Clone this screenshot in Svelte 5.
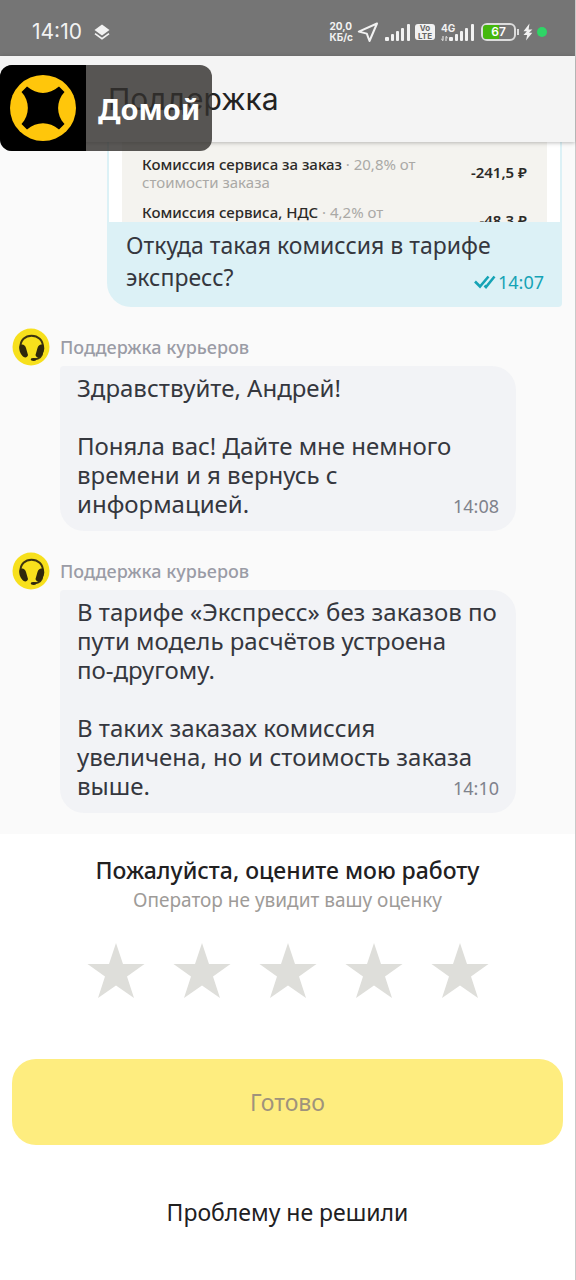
<script lang="ts">
  type Message = { id: number; text: string; time: string };

  const author = 'Поддержка курьеров';

  const charges = [
    { name: 'Комиссия сервиса за заказ', rate: '20,8% от', base: 'стоимости заказа', amount: '-241,5 ₽' },
    { name: 'Комиссия сервиса, НДС', rate: '4,2% от', base: '', amount: '-48,3 ₽' },
  ];

  const messages: Message[] = [
    {
      id: 1,
      text: 'Здравствуйте, Андрей!\n\nПоняла вас! Дайте мне немного\nвремени и я вернусь с\nинформацией.',
      time: '14:08',
    },
    {
      id: 2,
      text: 'В тарифе «Экспресс» без заказов по\nпути модель расчётов устроена\nпо-другому.\n\nВ таких заказах комиссия\nувеличена, но и стоимость заказа\nвыше.',
      time: '14:10',
    },
  ];

  let rating = $state(0);
</script>

{#snippet signal()}
  <svg class="signal" width="26" height="17" viewBox="0 0 26 17" fill="currentColor" aria-hidden="true">
    <rect x="0" y="13" width="4" height="4" rx="1" />
    <rect x="6" y="10" width="3" height="7" rx="1" />
    <rect x="11" y="7" width="3" height="10" rx="1" />
    <rect x="16" y="4" width="3" height="13" rx="1" />
    <rect x="22" y="0" width="3" height="17" rx="1" />
  </svg>
{/snippet}

<div class="screen">
  <div class="status">
    <span class="clock">14:10</span>
    <svg width="16" height="17" viewBox="0 0 16 17" aria-hidden="true">
      <path d="M8 0.5L15.5 6 8 11.5 0.5 6z" fill="currentColor" />
      <path d="M1 9.6l7 5.2 7-5.2" fill="none" stroke="currentColor" stroke-width="1.7" />
    </svg>
    <div class="indicators">
      <span class="speed">20,0<br />КБ/с</span>
      <svg class="nav" width="22" height="21" viewBox="0 0 22 21" fill="none" aria-hidden="true">
        <path d="M20 1.5L1.8 9.6l8 2 2.7 7.4z" stroke="currentColor" stroke-width="2" stroke-linejoin="round" />
      </svg>
      {@render signal()}
      <span class="volte">Vo<br />LTE</span>
      <span class="mobile">
        <span class="gen">4G</span>
        <svg class="arrows" width="7" height="5" viewBox="0 0 7 5" aria-hidden="true">
          <path d="M2 0v4.5M0.3 3L2 4.6M5 5V0.5M6.7 2L5 0.4" stroke="currentColor" fill="none" />
        </svg>
        {@render signal()}
      </span>
      <span class="battery"><span class="charge" style="width: 50%"></span><span class="level">67</span></span>
      <svg width="10" height="18" viewBox="0 0 10 18" fill="currentColor" aria-hidden="true">
        <path d="M6.5 0.5L0.5 8.2h3.4L0.5 12h3.7L3 17.5l6.3-7.7H6L9.4 6.5H5.6z" />
      </svg>
      <span class="live"></span>
    </div>
  </div>

  <header class="bar">
    <h1>Поддержка</h1>
    <button class="home" type="button">
      <svg width="86" height="86" viewBox="0 0 86 86" aria-hidden="true">
        <rect width="86" height="86" fill="#000" />
        <circle cx="43" cy="43" r="33" fill="#ffc60b" />
        <path
          d="M27 21.5C37 30 49 30 59 21.5L64.5 27C56 36 56 50 64.5 59L59 64.5C49 56 37 56 27 64.5L21.5 59C30 50 30 36 21.5 27Z"
          fill="#000"
        />
      </svg>
      <span>Домой</span>
    </button>
  </header>

  <main class="chat">
    <article class="outgoing">
      <div class="receipt">
        <ul>
          {#each charges as c}
            <li>
              <span>
                <b>{c.name}</b> · {c.rate}
                {#if c.base}<br />{c.base}{/if}
              </span>
              <strong>{c.amount}</strong>
            </li>
          {/each}
        </ul>
      </div>
      <p>
        Откуда такая комиссия в тарифе экспресс?
        <span class="sent">
          <svg width="22" height="14" viewBox="0 0 22 14" fill="none" aria-hidden="true">
            <path d="M1 6.5l5 5L14.5 1.5M10.5 10.5l1.5 1.5L20.5 1.5" stroke="currentColor" stroke-width="2.6" />
          </svg>
          <time>14:07</time>
        </span>
      </p>
    </article>

    {#each messages as m (m.id)}
      <article class="incoming">
        <svg class="avatar" width="38" height="38" viewBox="0 0 38 38" aria-hidden="true">
          <circle cx="19" cy="19" r="18.5" fill="#f7e01c" />
          <path d="M8.5 20C7 3.5 32 3.5 31 20" fill="none" stroke="#3d3410" stroke-width="2" />
          <path d="M30.5 23C30.5 28 27 31 22 31.5" fill="none" stroke="#3d3410" stroke-width="1.8" />
          <path d="M7.5 18C10 15 13 17 14 20L16 27C15.5 30 12 30 10.5 28C8 25 6.5 21.5 7.5 18Z" fill="#2e270c" />
          <path d="M32 18C29.5 15 26.5 17 25.5 20L23.5 27C24 30 27.5 30 29 28C31.5 25 33 21.5 32 18Z" fill="#2e270c" />
          <ellipse cx="21.5" cy="31.5" rx="2.8" ry="1.4" fill="#2e270c" />
        </svg>
        <span class="author">{author}</span>
        <div class="bubble">
          <span class="text">{m.text}</span>
          <time>{m.time}</time>
        </div>
      </article>
    {/each}
  </main>

  <form class="rate" onsubmit={(e) => e.preventDefault()}>
    <h2>Пожалуйста, оцените мою работу</h2>
    <p class="hint">Оператор не увидит вашу оценку</p>
    <div class="stars" role="radiogroup" aria-label="Оценка">
      {#each [1, 2, 3, 4, 5] as n}
        <label class:on={n <= rating}>
          <input type="radio" name="rating" value={n} bind:group={rating} aria-label={String(n)} />
          <svg width="58" height="56" viewBox="0 0 58 56" fill="currentColor" aria-hidden="true">
            <path d="M29 0l7 21h21.5L40 33.5 47 55 29 42.5 11 55l7-21.5L0.5 21H22z" />
          </svg>
        </label>
      {/each}
    </div>
    <button class="done" type="submit" disabled={rating === 0}>Готово</button>
    <button class="unsolved" type="button">Проблему не решили</button>
  </form>
</div>

<style>
  :global(body) {
    background: #fff;
  }
  .screen {
    box-sizing: border-box;
    min-height: 100vh;
    border-right: 1px solid #c9c9c9;
    font-family: 'Noto Sans', sans-serif;
    color: #35373e;
    background: #fff;
  }
  h1,
  h2,
  p,
  ul {
    margin: 0;
    padding: 0;
    font-weight: 400;
  }
  button {
    border: 0;
    padding: 0;
    font: inherit;
  }

  .status {
    display: flex;
    align-items: center;
    gap: 12px;
    box-sizing: border-box;
    height: 56px;
    padding: 8px 28px 0 32px;
    background: #757575;
    color: #f2f2f2;
    font-family: Inter, sans-serif;
  }
  .clock {
    font-size: 21px;
    line-height: 24px;
  }
  .indicators {
    display: flex;
    align-items: center;
    gap: 4px;
    margin-left: auto;
  }
  .speed {
    font-size: 10px;
    line-height: 11px;
    font-weight: 700;
  }
  .nav {
    margin-right: 2px;
  }
  .volte {
    width: 20px;
    border-radius: 3px;
    background: #f2f2f2;
    color: #666;
    font-size: 8px;
    line-height: 8px;
    font-weight: 700;
    text-align: center;
  }
  .mobile {
    display: grid;
    grid-template-columns: 8px 26px;
    align-items: end;
    margin-left: 2px;
  }
  .mobile > :global(*) {
    grid-row: 1;
  }
  .gen {
    grid-column: 1 / 3;
    align-self: start;
    font-size: 10px;
    line-height: 8px;
    font-weight: 700;
  }
  .arrows {
    grid-column: 1;
  }
  .mobile .signal {
    grid-column: 2;
  }
  .battery {
    display: grid;
    position: relative;
    box-sizing: border-box;
    width: 35px;
    height: 18px;
    margin: 0 3px 0 2px;
    border: 2px solid #dcdcdc;
    border-radius: 6px;
  }
  .battery::after {
    content: '';
    position: absolute;
    top: 4px;
    right: -5px;
    width: 2px;
    height: 6px;
    background: #dcdcdc;
  }
  .charge,
  .level {
    grid-area: 1 / 1;
  }
  .charge {
    border-radius: 3px 0 0 3px;
    background: #45b80d;
  }
  .level {
    color: #fff;
    font-size: 12px;
    line-height: 14px;
    font-weight: 600;
    text-align: center;
  }
  .live {
    width: 10px;
    height: 10px;
    border-radius: 50%;
    background: #2fd566;
  }

  .bar {
    position: relative;
    z-index: 1;
    display: flex;
    align-items: center;
    height: 86px;
    padding-left: 108px;
    background: #f4f4f4;
    box-shadow: 0 1px 4px rgba(0, 0, 0, 0.25);
  }
  h1 {
    color: #222;
    font-family: Inter, sans-serif;
    font-size: 30px;
    line-height: 36px;
  }
  .home {
    position: absolute;
    top: 9px;
    left: 0;
    display: flex;
    align-items: center;
    gap: 12px;
    padding-right: 12px;
    overflow: hidden;
    border-radius: 12px;
    background: rgba(50, 48, 46, 0.81);
    color: #fff;
    font-size: 29px;
    font-weight: 700;
  }

  .chat {
    display: flow-root;
    background: #fafafa;
  }
  .outgoing {
    margin: 0 13px 21px 107px;
    overflow: hidden;
    border-radius: 0 0 4px 24px;
    background: #dcf1f6;
  }
  /* the attached photo is scrolled half way under the bar */
  .receipt {
    height: 80px;
    margin: 0 2px;
    padding: 0 13px;
    overflow: hidden;
    background: #fff;
  }
  .receipt ul {
    padding: 13px 20px 0;
    list-style: none;
    background: #f4f3ef;
  }
  .receipt li {
    display: flex;
    justify-content: space-between;
    margin-bottom: 12px;
    color: #aaa9a6;
    font-size: 15px;
    line-height: 18px;
  }
  .receipt b,
  .receipt strong {
    color: #2b2a28;
    font-weight: 500;
  }
  .receipt strong {
    padding-top: 8px;
    font-weight: 600;
  }
  .outgoing p {
    padding: 7px 18px 14px 19px;
    font-size: 23px;
    line-height: 32px;
  }
  .sent {
    display: flex;
    float: right;
    align-items: center;
    gap: 2px;
    padding-top: 9px;
    color: #15a3b5;
  }
  time {
    font-size: 18px;
    line-height: 24px;
  }

  .incoming {
    display: grid;
    grid-template-columns: 38px 1fr;
    column-gap: 10px;
    align-items: center;
    margin: 0 59px 21px 12px;
  }
  .author {
    color: #9a9ca6;
    font-size: 18px;
    line-height: 24px;
    font-weight: 500;
  }
  .bubble {
    grid-column: 2;
    box-sizing: border-box;
    padding: 7px 17px 13px;
    border-radius: 4px 24px 24px 24px;
    background: #f2f3f6;
    font-size: 24px;
    line-height: 29px;
  }
  .text {
    white-space: pre-line;
  }
  .bubble time {
    float: right;
    padding-top: 5px;
    color: #7f828c;
  }

  .rate {
    display: flex;
    flex-direction: column;
    align-items: center;
    padding: 20px 12px;
  }
  h2 {
    color: #21201f;
    font-size: 23px;
    line-height: 32px;
    font-weight: 500;
  }
  .hint {
    color: #9e9b98;
    font-size: 19px;
    line-height: 29px;
  }
  .stars {
    display: flex;
    gap: 28px;
    margin: 28px 0 60px;
  }
  .stars label {
    display: grid;
    color: #dededa;
    cursor: pointer;
  }
  .stars label.on {
    color: #fce000;
  }
  .stars input,
  .stars svg {
    grid-area: 1 / 1;
  }
  .stars input {
    appearance: none;
    margin: 0;
  }
  .done {
    width: 100%;
    height: 86px;
    border-radius: 24px;
    background: #feed7f;
    color: #9f937c;
    font-size: 23px;
  }
  .unsolved {
    margin-top: 48px;
    background: none;
    color: #21201f;
    font-size: 23px;
    line-height: 38px;
  }
</style>
